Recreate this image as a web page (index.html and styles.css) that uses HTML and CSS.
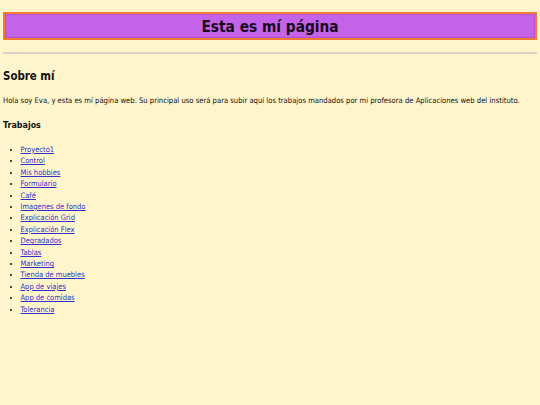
FILE: index.html
```html
<!DOCTYPE html>
<html lang="es">
<head>
<meta charset="utf-8">
<title>Esta es mí página</title>
<link rel="stylesheet" href="styles.css">
</head>
<body>
<header class="banner">
  <h1 class="banner-title">Esta es mí página</h1>
</header>
<hr class="divider">
<main>
  <section class="about">
    <h2 class="section-title">Sobre mí</h2>
    <p class="intro">Hola soy Eva, y esta es mí página web. Su principal uso será para subir aquí los trabajos mandados por mi profesora de Aplicaciones web del instituto.</p>
  </section>
  <section class="works">
    <h3 class="sub-title">Trabajos</h3>
    <ul class="work-list">
      <li><a href="#">Proyecto1</a></li>
      <li><a href="#">Control</a></li>
      <li><a href="#">Mis hobbies</a></li>
      <li><a href="#">Formulario</a></li>
      <li><a href="#">Café</a></li>
      <li><a href="#">Imagenes de fondo</a></li>
      <li><a href="#">Explicación Grid</a></li>
      <li><a href="#">Explicación Flex</a></li>
      <li><a href="#">Degradados</a></li>
      <li><a href="#">Tablas</a></li>
      <li><a href="#">Marketing</a></li>
      <li><a href="#">Tienda de muebles</a></li>
      <li><a href="#">App de viajes</a></li>
      <li><a href="#">App de comidas</a></li>
      <li><a href="#">Tolerancia</a></li>
    </ul>
  </section>
</main>
</body>
</html>
```
FILE: styles.css
```css
html {
  background: #fff5cc;
}
body {
  margin: 0 3px;
  font-family: "DejaVu Sans Condensed", "DejaVu Sans", sans-serif;
  font-stretch: condensed;
  font-size: 7.6px;
  color: #111;
}
.banner {
  padding-top: 12px;
}
.banner-title {
  margin: 0;
  height: 28px;
  box-sizing: border-box;
  background: #c462e8;
  border: 2px solid #f27a36;
  box-shadow: inset 0 0 2px rgba(80, 20, 60, 0.5);
  text-align: center;
  font-size: 15.3px;
  line-height: 26px;
  color: #15081a;
}
.divider {
  margin: 12px 0 0;
  border: 0;
  border-top: 2px solid #d8d2c2;
  height: 0;
}
.section-title {
  margin: 15px 0 0;
  font-size: 11.4px;
  line-height: 14px;
}
.intro {
  margin: 13px 0 0;
  line-height: 10px;
}
.sub-title {
  margin: 13px 0 0;
  font-size: 8.9px;
  line-height: 12px;
}
.work-list {
  margin: 13px 0 0;
  padding-left: 17.5px;
}
.work-list li {
  font-size: 7.5px;
  line-height: 11.4px;
}
.work-list a {
  color: #3030c8;
}
```
